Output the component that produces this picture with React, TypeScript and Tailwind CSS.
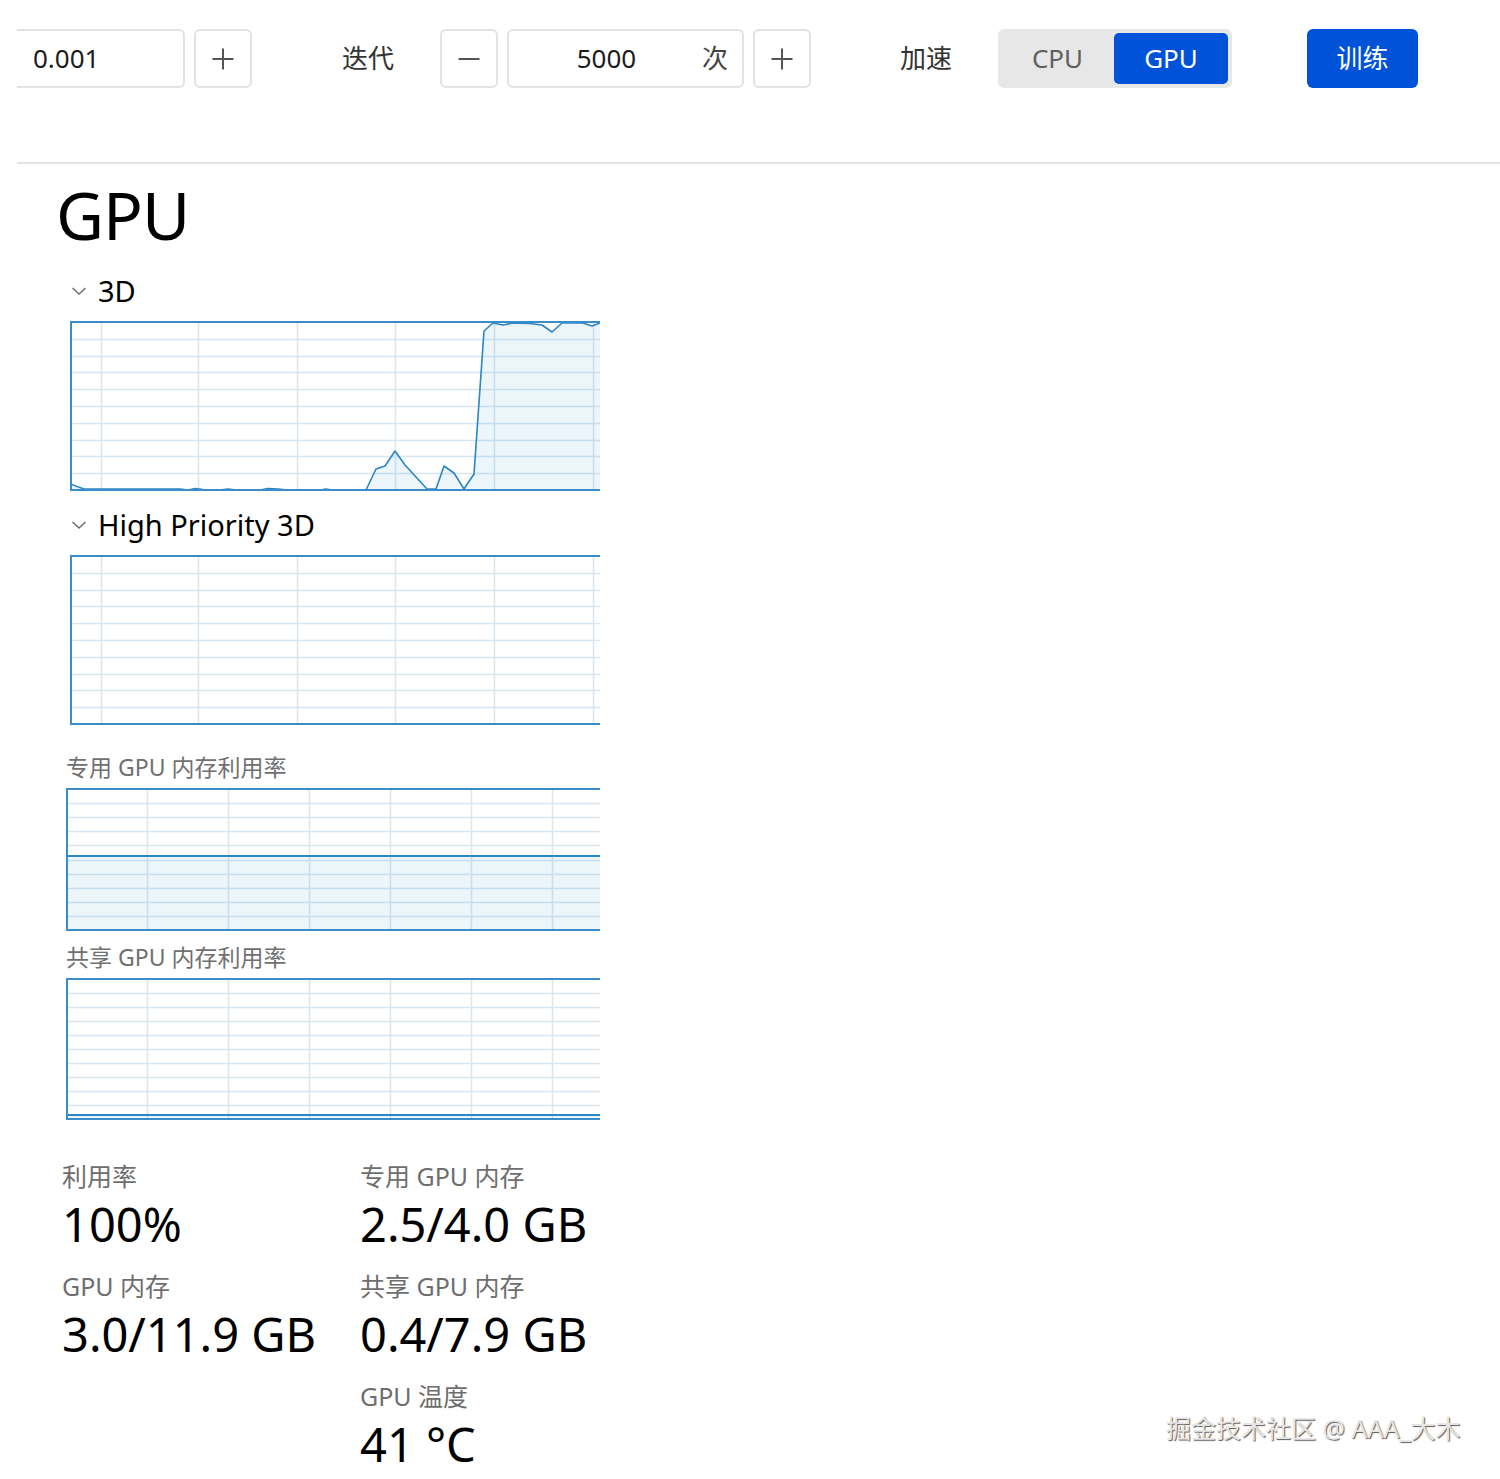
import React from 'react';

const FONT = '"Noto Sans", "Noto Sans CJK SC", sans-serif';
const BORDER = '#3a8dc8';
const LINE = '#2a86c4';
const GRID = '#d7e6f0';
const FILL = 'rgba(17,125,187,0.08)';

const loadPoints: [number, number][] = [
  [0, 163], [14, 168], [110, 168], [118, 169], [125, 167.5], [133, 168.5], [150, 169], [158, 168], [166, 169],
  [190, 169], [198, 167.5], [208, 168], [218, 169], [250, 169], [256, 168], [262, 169],
  [296, 169], [306, 148], [315, 145], [325, 130], [335, 144], [357, 168], [366, 168], [374, 145],
  [384, 152], [394, 168], [404, 153], [414, 10], [423, 2], [433, 4], [443, 2], [460, 2.5],
  [472, 4], [482, 11], [492, 2], [513, 2], [522, 5], [530, 2],
];

function Chart({
  w,
  h,
  cols,
  rows,
  children,
}: {
  w: number;
  h: number;
  cols: number[];
  rows: number;
  children?: React.ReactNode;
}) {
  const step = (h - 2) / rows;
  return (
    <svg width={w} height={h} className="block">
      {cols.map(x => (
        <line key={`c${x}`} x1={x + 0.5} y1={0} x2={x + 0.5} y2={h} stroke={GRID} strokeWidth={1.5} />
      ))}
      {Array.from({ length: rows - 1 }, (_, i) => {
        const y = Math.round(1 + step * (i + 1)) + 0.5;
        return <line key={`r${i}`} x1={0} y1={y} x2={w} y2={y} stroke={GRID} strokeWidth={1.5} />;
      })}
      {children}
      <line x1={1} y1={0} x2={1} y2={h} stroke={BORDER} strokeWidth={2} />
      <line x1={0} y1={1} x2={w} y2={1} stroke={BORDER} strokeWidth={2} />
      <line x1={0} y1={h - 1} x2={w} y2={h - 1} stroke={BORDER} strokeWidth={2} />
    </svg>
  );
}

function LoadChart() {
  const pts = loadPoints.map(p => p.join(',')).join(' ');
  return (
    <Chart w={530} h={170} cols={[31, 128, 227, 325, 424, 523]} rows={10}>
      <polygon points={`${pts} 530,169 0,169`} fill={FILL} />
      <polyline points={pts} fill="none" stroke={LINE} strokeWidth={1.6} strokeLinejoin="round" />
    </Chart>
  );
}

function MemChart({ h, level }: { h: number; level: number }) {
  return (
    <Chart w={534} h={h} cols={[81, 162, 243, 324, 405, 486]} rows={10}>
      <rect x={0} y={level} width={534} height={h - level} fill={FILL} />
      <line x1={0} y1={level} x2={534} y2={level} stroke={LINE} strokeWidth={2} />
    </Chart>
  );
}

function Chevron() {
  return (
    <svg width="16" height="10" viewBox="0 0 16 10" className="block">
      <path d="M1.5 2 L8 8 L14.5 2" fill="none" stroke="#6b6b6b" strokeWidth="1.4" />
    </svg>
  );
}

function PlusIcon() {
  return (
    <svg width="24" height="24" viewBox="0 0 24 24">
      <path d="M12 1.5 V22.5 M1.5 12 H22.5" stroke="#555" strokeWidth="2" />
    </svg>
  );
}

function MinusIcon() {
  return (
    <svg width="24" height="24" viewBox="0 0 24 24">
      <path d="M1.5 12 H22.5" stroke="#555" strokeWidth="2" />
    </svg>
  );
}

function Stat({ label, value }: { label: string; value: string }) {
  return (
    <div className="mb-[16px]">
      <div className="flex h-[30px] items-center text-[25px] text-[#6e6e6e]">{label}</div>
      <div className="flex h-[64px] items-center text-[47px] leading-none text-black">{value}</div>
    </div>
  );
}

export default function App() {
  const btn = 'flex w-[58px] items-center justify-center rounded-[6px] border-2 border-[#e2e2e2] bg-white';
  return (
    <div className="relative min-h-[1479px] w-[1500px] overflow-hidden bg-white" style={{ fontFamily: FONT }}>
      {/* toolbar */}
      <div className="mt-[29px] flex h-[59px] text-[26px] text-[#1c1c1c]">
        <div className="ml-[17px] flex w-[168px] items-center rounded-r-[6px] border-2 border-l-0 border-[#e2e2e2] pl-[16px]">
          0.001
        </div>
        <button className={`ml-[9px] ${btn}`}>
          <PlusIcon />
        </button>
        <span className="ml-[90px] flex w-[98px] items-center text-[#333]">迭代</span>
        <button className={btn}>
          <MinusIcon />
        </button>
        <div className="ml-[9px] flex w-[237px] items-center rounded-[6px] border-2 border-[#e2e2e2]">
          <span className="flex-1 pl-[14px] text-center">5000</span>
          <span className="pr-[14px] pl-[12px] text-[#444]">次</span>
        </div>
        <button className={`ml-[9px] ${btn}`}>
          <PlusIcon />
        </button>
        <span className="ml-[89px] flex w-[98px] items-center text-[#333]">加速</span>
        <div className="flex w-[234px] rounded-[6px] bg-[#e7e7e7] p-[4px] pl-[3px]">
          <div className="flex w-[113px] items-center justify-center text-[#606060]">CPU</div>
          <div className="flex w-[114px] items-center justify-center rounded-[5px] bg-[#0052d9] text-white">GPU</div>
        </div>
        <button className="ml-[75px] flex w-[111px] items-center justify-center rounded-[6px] bg-[#0052d9] text-white">
          训练
        </button>
      </div>

      <div className="mt-[74px] ml-[17px] h-[2px] bg-[#e4e4e4]" />

      {/* GPU panel */}
      <div className="flex flex-col">
        <div className="mt-[17px] ml-[56px] h-[66px] text-[66px] leading-none tracking-[-1px] text-black">GPU</div>

        <div className="mt-[24px] ml-[71px] flex h-[40px] items-center gap-[11px] text-[29px] text-black">
          <Chevron />
          <span>3D</span>
        </div>
        <div className="mt-[10px] ml-[70px]">
          <LoadChart />
        </div>

        <div className="mt-[14px] ml-[71px] flex h-[40px] items-center gap-[11px] text-[29px] text-black">
          <Chevron />
          <span>High Priority 3D</span>
        </div>
        <div className="mt-[10px] ml-[70px]">
          <Chart w={530} h={170} cols={[31, 128, 227, 325, 424, 523]} rows={10} />
        </div>

        <div className="mt-[27px] ml-[66px] flex h-[30px] items-center text-[23px] text-[#707070]">
          专用 GPU 内存利用率
        </div>
        <div className="mt-[6px] ml-[66px]">
          <MemChart h={143} level={68} />
        </div>

        <div className="mt-[11px] ml-[66px] flex h-[30px] items-center text-[23px] text-[#707070]">
          共享 GPU 内存利用率
        </div>
        <div className="mt-[6px] ml-[66px]">
          <MemChart h={142} level={137} />
        </div>

        <div className="mt-[42px] ml-[62px] grid grid-cols-[298px_auto]">
          <Stat label="利用率" value="100%" />
          <Stat label="专用 GPU 内存" value="2.5/4.0 GB" />
          <Stat label="GPU 内存" value="3.0/11.9 GB" />
          <Stat label="共享 GPU 内存" value="0.4/7.9 GB" />
          <div />
          <Stat label="GPU 温度" value="41 °C" />
        </div>
      </div>

      <div className="absolute top-[1412px] left-[1166px] text-[25px] leading-[32px] text-[#e6e6e6] [text-shadow:1px_1px_1px_rgba(0,0,0,0.65)]">
        掘金技术社区 @ AAA_大木
      </div>
    </div>
  );
}
